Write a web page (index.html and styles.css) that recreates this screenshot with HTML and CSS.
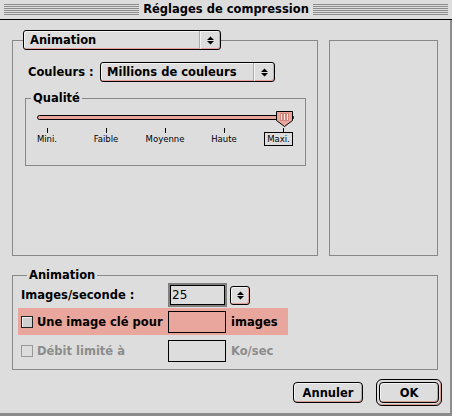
FILE: index.html
```html
<!DOCTYPE html>
<html lang="fr">
<head>
  <meta charset="UTF-8" />
  <title>Réglages de compression</title>
  <link rel="stylesheet" href="styles.css">
</head>
<body>

  <div class="window">
    <div class="titlebar">
      <span class="stripes"></span>
      <span class="title">Réglages de compression</span>
      <span class="stripes"></span>
    </div>

    <div class="dialog">
      <div class="top">
        <fieldset class="group settings">
          <legend class="popup-legend">
            <div class="popup codec">
              <span class="value">Animation</span>
              <span class="arrows"><svg width="7" height="9" viewBox="0 0 7 9"><path d="M0 4 L3.5 0.5 L7 4 Z M0 5 L7 5 L3.5 8.5 Z" fill="#000"/></svg></span>
            </div>
          </legend>

          <div class="colors-row">
            <span class="label">Couleurs :</span>
            <div class="popup colors">
              <span class="value">Millions de couleurs</span>
              <span class="arrows"><svg width="7" height="9" viewBox="0 0 7 9"><path d="M0 4 L3.5 0.5 L7 4 Z M0 5 L7 5 L3.5 8.5 Z" fill="#000"/></svg></span>
            </div>
          </div>

          <fieldset class="group quality">
            <legend>Qualité</legend>
            <div class="slider">
              <div class="track"></div>
              <svg class="thumb" width="17" height="16" viewBox="0 0 17 16">
                <path d="M0.5 0.5 H16.5 V9.5 L8.5 15.5 L0.5 9.5 Z" fill="#e8a69c" stroke="#000"/>
                <rect x="4" y="2" width="9" height="8" fill="#d4877d"/>
                <path d="M5.5 3 V9 M8.5 3 V9 M11.5 3 V9" stroke="#fbe9e6"/>
              </svg>
            </div>
            <div class="ticks">
              <div class="tick"><span class="mark"></span><span class="name">Mini.</span></div>
              <div class="tick"><span class="mark"></span><span class="name">Faible</span></div>
              <div class="tick"><span class="mark"></span><span class="name">Moyenne</span></div>
              <div class="tick"><span class="mark"></span><span class="name">Haute</span></div>
              <div class="tick"><span class="mark"></span><span class="name selected">Maxi.</span></div>
            </div>
          </fieldset>
        </fieldset>

        <div class="preview"></div>
      </div>

      <fieldset class="group animation">
        <legend>Animation</legend>

        <div class="row">
          <span class="label">Images/seconde :</span>
          <span class="field focus">25</span>
          <span class="little-arrows"><svg width="7" height="9" viewBox="0 0 7 9"><path d="M0 4 L3.5 0.5 L7 4 Z M0 5 L7 5 L3.5 8.5 Z" fill="#000"/></svg></span>
        </div>

        <div class="row highlight">
          <span class="label"><span class="checkbox"></span>Une image clé pour</span>
          <span class="field"></span>
          <span class="suffix">images</span>
        </div>

        <div class="row disabled">
          <span class="label"><span class="checkbox"></span>Débit limité à</span>
          <span class="field"></span>
          <span class="suffix">Ko/sec</span>
        </div>
      </fieldset>

      <div class="buttons">
        <button class="btn">Annuler</button>
        <span class="default-ring"><button class="btn ok">OK</button></span>
      </div>
    </div>
  </div>

</body>
</html>
```

FILE: styles.css
```css
body {
  margin: 0;
  font-family: "DejaVu Sans", sans-serif;
  font-size: 11.5px;
  font-weight: bold;
  color: #000;
}

.window {
  width: 452px;
  height: 416px;
  background-color: #dddddd;
}

/* title bar */

.titlebar {
  display: flex;
  align-items: center;
  height: 19px;
  border-bottom: 1px solid #000;
}

.stripes {
  flex: 1;
  height: 11px;
  margin: 0 4px;
  background: repeating-linear-gradient(to bottom, #8c8c8c 0 1px, transparent 1px 2px);
}

.title {
  line-height: 19px;
}

/* dialog body */

.dialog {
  box-sizing: border-box;
  height: 396px;
  padding: 10px 12px 0 12px;
  border-right: 2px solid #8c8c8c;
  border-bottom: 3px solid #8c8c8c;
}

.top {
  display: flex;
  gap: 11px;
  height: 226px;
}

.group {
  margin: 0;
  padding: 0;
  border: 1px solid #888;
  min-width: 0;
}

.group legend {
  padding: 0 2px;
}

.settings {
  width: 306px;
  box-sizing: border-box;
}

.settings .popup-legend {
  padding: 0;
  margin-left: 10px;
}

.preview {
  flex: 1;
  margin-top: 10px;
  border: 1px solid #888;
}

/* popup menus */

.popup {
  display: flex;
  box-sizing: border-box;
  height: 20px;
  border: 1px solid #000;
  border-radius: 3px;
  box-shadow: inset -1px -1px 0 #e3a197, inset 1px 1px 0 #f4f4f4;
}

.popup .value {
  flex: 1;
  padding-left: 6px;
  line-height: 18px;
}

.popup .arrows,
.little-arrows {
  display: flex;
  align-items: center;
  justify-content: center;
}

.popup .arrows {
  width: 20px;
  border-left: 1px solid #d59b93;
  box-shadow: inset 1px 0 0 #f4f4f4;
}

.codec {
  width: 198px;
}

.colors-row {
  display: flex;
  align-items: center;
  padding-left: 15px;
  margin-top: 12px;
}

.colors-row .label {
  width: 72px;
}

.colors {
  width: 175px;
}

/* quality slider */

.quality {
  margin: 9px 0 0 12px;
  width: 281px;
  box-sizing: border-box;
  padding: 0 0 19px 0;
}

.quality legend {
  margin-left: 5px;
}

.slider {
  position: relative;
  height: 23px;
}

.track {
  position: absolute;
  left: 11px;
  top: 10px;
  width: 257px;
  height: 5px;
  box-sizing: border-box;
  border: 1px solid #000;
  border-radius: 3px;
  background-color: #e8a69c;
}

.thumb {
  position: absolute;
  left: 250px;
  top: 6px;
}

.ticks {
  display: flex;
  gap: 19px;
  margin-left: 1px;
}

.tick {
  width: 40px;
  display: flex;
  flex-direction: column;
  align-items: center;
}

.mark {
  width: 1px;
  height: 5px;
  background-color: #000;
}

.name {
  font-size: 8.5px;
  font-weight: normal;
  line-height: 12px;
  padding: 0 2px;
}

.name.selected {
  border: 1px solid #000;
  margin: -1px 9px 0 0;
}

/* animation group */

.animation {
  margin-top: 12px;
  width: 426px;
  box-sizing: border-box;
  padding: 1px 0 5px 5px;
}

.animation legend {
  margin-left: 9px;
}

.row {
  display: flex;
  align-items: center;
  width: 270px;
  height: 24px;
}

.row.highlight {
  height: 27px;
  margin-top: 1px;
  background-color: #e8a69c;
}

.row.disabled {
  height: 27px;
  margin-top: 2px;
  color: #8c8c8c;
}

.row .label {
  display: flex;
  align-items: center;
  box-sizing: border-box;
  width: 150px;
  padding-left: 3px;
}

.checkbox {
  width: 12px;
  height: 12px;
  box-sizing: border-box;
  margin-right: 4px;
  border: 1px solid #222;
  background-color: #cfcfcf;
  box-shadow: inset 1px 1px 0 #f2f2f2;
}

.disabled .checkbox {
  border-color: #999;
  background-color: #dddddd;
  box-shadow: none;
}

.field {
  width: 58px;
  height: 22px;
  box-sizing: border-box;
  border: 1px solid #000;
  font-weight: normal;
  font-size: 12px;
  line-height: 20px;
  padding-left: 3px;
}

.field.focus {
  width: 59px;
  height: 24px;
  border: 2px solid #808080;
  box-shadow: inset 0 0 0 1px #000;
  line-height: 20px;
  padding-left: 2px;
}

.little-arrows {
  width: 20px;
  height: 19px;
  box-sizing: border-box;
  margin-left: 3px;
  border: 1px solid #000;
  border-radius: 3px;
  box-shadow: inset -1px -1px 0 #e3a197, inset 1px 1px 0 #f4f4f4;
}

.suffix {
  margin-left: 5px;
}

/* buttons */

.buttons {
  display: flex;
  justify-content: flex-end;
  align-items: center;
  gap: 13px;
  margin: 9px -4px 0 0;
}

.btn {
  font-family: inherit;
  font-size: inherit;
  font-weight: bold;
  color: #000;
  width: 70px;
  height: 21px;
  padding: 0;
  background-color: #dddddd;
  border: 1px solid #000;
  border-radius: 4px;
  box-shadow: inset -1px -1px 0 #d59b93, inset 1px 1px 0 #f4f4f4;
}

.default-ring {
  display: flex;
  padding: 2px;
  border: 1px solid #000;
  border-radius: 6px;
  box-shadow: inset -1px -1px 0 #d59b93;
}

.btn.ok {
  width: 60px;
}
```
